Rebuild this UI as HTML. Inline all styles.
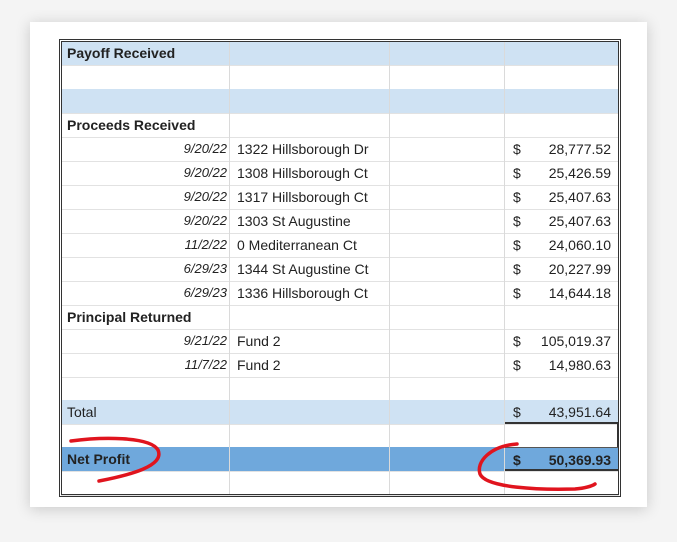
<!DOCTYPE html>
<html><head><style>
body{margin:0;width:677px;height:542px;background:#f4f4f4;position:relative;overflow:hidden;font-family:"Liberation Sans",Arial,sans-serif;}
.card{position:absolute;left:30px;top:22px;width:617px;height:485px;background:#fff;box-shadow:0 2px 14px rgba(0,0,0,.18);}
.grid{position:absolute;left:61px;top:41px;width:558px;}
.r{position:absolute;left:0;width:558px;height:24px;border-bottom:1px solid #e2e2e2;font-size:14px;color:#222;}
.c{position:absolute;top:0;height:24px;line-height:24px;box-sizing:border-box;border-right:1px solid #dadada;white-space:nowrap;}
.c1{left:0;width:169px;padding:0 2px 0 6px}
.c2{left:169px;width:160px;padding-left:7px}
.c3{left:329px;width:115px}
.c4{left:444px;width:114px;border-right:none;padding:0 8px 0 8px}
.b{font-weight:bold}
.d{text-align:right;font-style:italic;font-size:13px}
.lb{background:#cfe2f3}
.db{background:#6fa8dc}
.amt{display:flex;justify-content:space-between}
.out{position:absolute;left:59px;top:39px;width:556px;height:452px;border:3px double #333;pointer-events:none}
</style></head><body>
<div class="card"></div>
<div class="grid">
<div class="r lb" style="top:0"><div class="c c1 b">Payoff Received</div><div class="c c2"></div><div class="c c3"></div><div class="c c4"></div></div>
<div class="r" style="top:24px"><div class="c c1"></div><div class="c c2"></div><div class="c c3"></div><div class="c c4"></div></div>
<div class="r lb" style="top:48px"><div class="c c1"></div><div class="c c2"></div><div class="c c3"></div><div class="c c4"></div></div>
<div class="r" style="top:72px"><div class="c c1 b">Proceeds Received</div><div class="c c2"></div><div class="c c3"></div><div class="c c4"></div></div>
<div class="r" style="top:96px"><div class="c c1 d">9/20/22</div><div class="c c2">1322 Hillsborough Dr</div><div class="c c3"></div><div class="c c4 amt"><span>$</span><span>28,777.52</span></div></div>
<div class="r" style="top:120px"><div class="c c1 d">9/20/22</div><div class="c c2">1308 Hillsborough Ct</div><div class="c c3"></div><div class="c c4 amt"><span>$</span><span>25,426.59</span></div></div>
<div class="r" style="top:144px"><div class="c c1 d">9/20/22</div><div class="c c2">1317 Hillsborough Ct</div><div class="c c3"></div><div class="c c4 amt"><span>$</span><span>25,407.63</span></div></div>
<div class="r" style="top:168px"><div class="c c1 d">9/20/22</div><div class="c c2">1303 St Augustine</div><div class="c c3"></div><div class="c c4 amt"><span>$</span><span>25,407.63</span></div></div>
<div class="r" style="top:192px"><div class="c c1 d">11/2/22</div><div class="c c2">0 Mediterranean Ct</div><div class="c c3"></div><div class="c c4 amt"><span>$</span><span>24,060.10</span></div></div>
<div class="r" style="top:216px"><div class="c c1 d">6/29/23</div><div class="c c2">1344 St Augustine Ct</div><div class="c c3"></div><div class="c c4 amt"><span>$</span><span>20,227.99</span></div></div>
<div class="r" style="top:240px"><div class="c c1 d">6/29/23</div><div class="c c2">1336 Hillsborough Ct</div><div class="c c3"></div><div class="c c4 amt"><span>$</span><span>14,644.18</span></div></div>
<div class="r" style="top:264px"><div class="c c1 b">Principal Returned</div><div class="c c2"></div><div class="c c3"></div><div class="c c4"></div></div>
<div class="r" style="top:288px"><div class="c c1 d">9/21/22</div><div class="c c2">Fund 2</div><div class="c c3"></div><div class="c c4 amt"><span>$</span><span>105,019.37</span></div></div>
<div class="r" style="top:312px"><div class="c c1 d">11/7/22</div><div class="c c2">Fund 2</div><div class="c c3"></div><div class="c c4 amt"><span>$</span><span>14,980.63</span></div></div>
<div class="r" style="top:336px"><div class="c c1"></div><div class="c c2"></div><div class="c c3"></div><div class="c c4"></div></div>
<div class="r lb" style="top:359px"><div class="c c1">Total</div><div class="c c2"></div><div class="c c3"></div><div class="c c4 amt" style="border-bottom:2px solid #333"><span>$</span><span>43,951.64</span></div></div>
<div class="r" style="top:383px"><div class="c c1"></div><div class="c c2"></div><div class="c c3"></div><div class="c c4" style="border-right:2px solid #333"></div></div>
<div class="r db" style="top:406px"><div class="c c1 b">Net Profit</div><div class="c c2"></div><div class="c c3"></div><div class="c c4 amt b" style="border-bottom:2px solid #333;border-top:1px solid #555"><span>$</span><span>50,369.93</span></div></div>
<div class="r" style="top:430px"><div class="c c1"></div><div class="c c2"></div><div class="c c3"></div><div class="c c4"></div></div>
</div>
<div class="out"></div>
<svg width="677" height="542" style="position:absolute;left:0;top:0" fill="none" stroke="#e0141e" stroke-width="3.5" stroke-linecap="round">
<path d="M71 441 C100 437 150 436 158 450 C165 466 130 475 99 481"/>
<path d="M517 444 C490 446 476 462 480 474 C486 488 540 490 575 489 C586 488 592 486 595 484"/>
</svg>
</body></html>
